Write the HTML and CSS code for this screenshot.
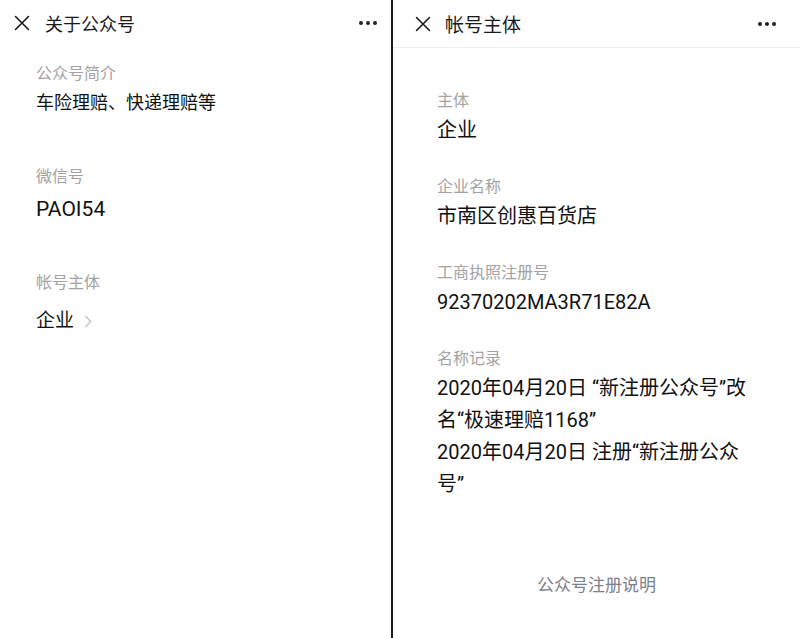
FILE: index.html
```html
<!DOCTYPE html>
<html lang="zh-CN">

<head>
    <meta charset="UTF-8">
    <meta name="viewport" content="width=device-width, initial-scale=1.0">
    <title>关于公众号</title>
    <link rel="stylesheet" href="styles.css">
</head>

<body>
    <div class="screens">
        <section class="panel panel-about">
            <header class="topbar">
                <svg class="close-icon" width="16" height="16" viewBox="0 0 16 16">
                    <path d="M1.5 1.5 L14.5 14.5 M14.5 1.5 L1.5 14.5" stroke="#1a1a1a" stroke-width="1.6" fill="none" stroke-linecap="round" />
                </svg>
                <h1 class="title">关于公众号</h1>
                <span class="more"><i></i><i></i><i></i></span>
            </header>

            <div class="content">
                <div class="item">
                    <div class="label">公众号简介</div>
                    <div class="value value-tight">车险理赔、快递理赔等</div>
                </div>
                <div class="item">
                    <div class="label">微信号</div>
                    <div class="value value-id">PAOI54</div>
                </div>
                <div class="item">
                    <div class="label">帐号主体</div>
                    <div class="value value-link">企业
                        <svg class="chevron" width="8" height="13" viewBox="0 0 8 13">
                            <path d="M1.5 1 L6.5 6.5 L1.5 12" stroke="#c4c4c4" stroke-width="1.5" fill="none" />
                        </svg>
                    </div>
                </div>
            </div>
        </section>

        <div class="divider"></div>

        <section class="panel panel-subject">
            <header class="topbar topbar-line">
                <svg class="close-icon" width="16" height="16" viewBox="0 0 16 16">
                    <path d="M1.5 1.5 L14.5 14.5 M14.5 1.5 L1.5 14.5" stroke="#1a1a1a" stroke-width="1.6" fill="none" stroke-linecap="round" />
                </svg>
                <h1 class="title">帐号主体</h1>
                <span class="more"><i></i><i></i><i></i></span>
            </header>

            <div class="content">
                <div class="item">
                    <div class="label">主体</div>
                    <div class="value">企业</div>
                </div>
                <div class="item">
                    <div class="label">企业名称</div>
                    <div class="value">市南区创惠百货店</div>
                </div>
                <div class="item">
                    <div class="label">工商执照注册号</div>
                    <div class="value">92370202MA3R71E82A</div>
                </div>
                <div class="item">
                    <div class="label">名称记录</div>
                    <div class="value">2020年04月20日 “新注册公众号”改名“极速理赔1168”</div>
                    <div class="value">2020年04月20日 注册“新注册公众号”</div>
                </div>
            </div>

            <a class="footer-link" href="#">公众号注册说明</a>
        </section>
    </div>
</body>

</html>
```

FILE: styles.css
```css
* {
    box-sizing: border-box;
}

body {
    margin: 0;
    padding: 0;
    background: #ffffff;
    color: #111111;
    font-family: "Roboto", "Noto Sans CJK SC", sans-serif;
}

.screens {
    display: flex;
    width: 800px;
    height: 638px;
}

.panel {
    display: flex;
    flex-direction: column;
    background: #ffffff;
}

.panel-about {
    width: 391px;
}

.panel-subject {
    flex: 1;
}

.divider {
    width: 2px;
    background: #1c1c1c;
}

/* top navigation bar */
.topbar {
    display: flex;
    align-items: center;
    height: 45px;
    padding: 0 14px;
}

.panel-subject .topbar {
    padding: 0 24px 0 22px;
    height: 48px;
}

.topbar-line {
    border-bottom: 1px solid #f0f0f0;
}

.close-icon {
    flex-shrink: 0;
}

.title {
    flex: 1;
    margin: 0 0 0 15px;
    font-size: 18px;
    font-weight: 400;
    color: #1a1a1a;
}

.panel-subject .title {
    font-size: 19px;
    margin-left: 14px;
}

.more {
    display: flex;
    gap: 3px;
}

.more i {
    width: 4px;
    height: 4px;
    border-radius: 50%;
    background: #222222;
}

/* content list */
.content {
    display: flex;
    flex-direction: column;
}

.panel-about .content {
    padding: 17px 20px 0 36px;
    gap: 46px;
}

.panel-subject .content {
    padding: 42px 38px 0 44px;
    gap: 30px;
}

.label {
    font-size: 16px;
    line-height: 24px;
    color: #a3a3a3;
}

.value {
    font-size: 18px;
    line-height: 32px;
    color: #111111;
}

.panel-about .value {
    margin-top: 4px;
}

.panel-about .value-tight {
    margin-top: 1px;
}

.panel-about .value-id {
    font-size: 21px;
}

.value-link {
    display: flex;
    align-items: center;
    gap: 10px;
    padding-top: 6px;
    font-size: 19px;
}

.panel-subject .label {
    line-height: 22px;
}

.panel-subject .value {
    font-size: 20px;
    line-height: 32px;
    margin-top: 2px;
}

.panel-subject .value + .value {
    margin-top: 0;
}

.footer-link {
    margin-top: auto;
    margin-bottom: 41px;
    text-align: center;
    font-size: 17px;
    line-height: 24px;
    color: #7c808b;
    text-decoration: none;
}
```
